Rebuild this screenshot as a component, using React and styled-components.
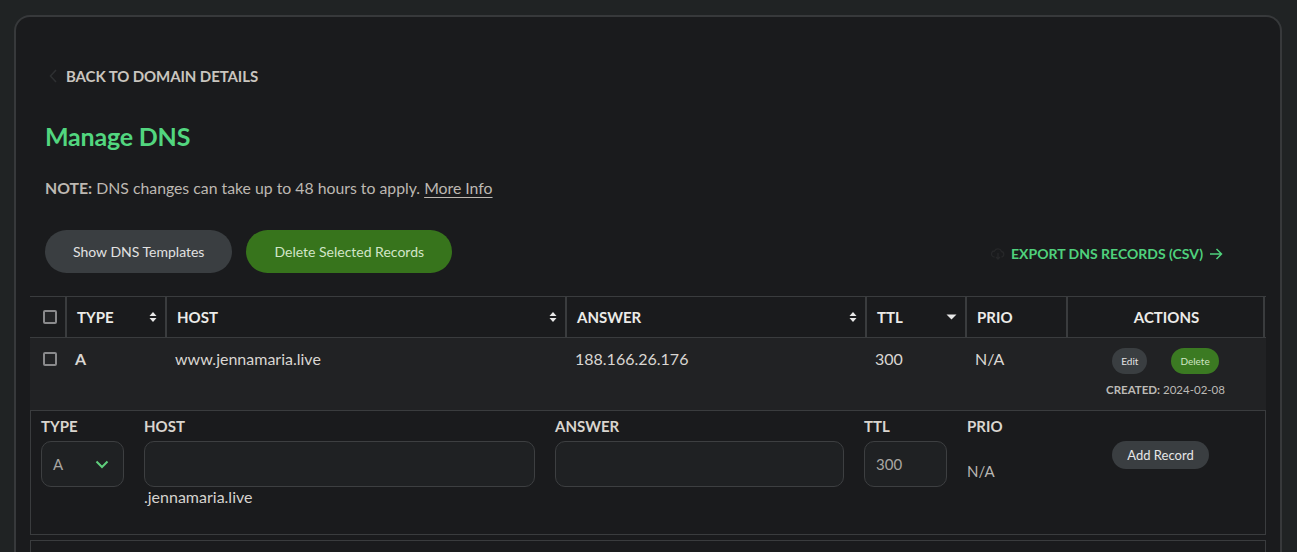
import React from 'react';
import styled, { createGlobalStyle } from 'styled-components';

const GlobalStyle = createGlobalStyle`
  body {
    margin: 0;
    background-color: #202324;
    font-family: Lato, "Liberation Sans", sans-serif;
    color: #d8d8d8;
  }
`;

const Page = styled.div`
  padding: 15px 15px 0 14px;
  height: 552px;
  overflow: hidden;
  box-sizing: border-box;
`;

const Card = styled.div`
  background-color: #1a1b1d;
  border: 2px solid #37393b;
  border-bottom: none;
  border-radius: 16px 16px 0 0;
  padding: 0 14px 0 14px;
  min-height: 560px;
`;

const Header = styled.div`
  padding: 0 15px;
`;

const BackLink = styled.a`
  display: flex;
  align-items: center;
  gap: 8px;
  margin-top: 50px;
  margin-left: 4px;
  font-size: 15px;
  font-weight: 700;
  color: #c9c5bf;
  text-transform: uppercase;
  letter-spacing: -0.1px;
  cursor: pointer;
`;

const Title = styled.h1`
  margin: 36px 0 0;
  font-size: 25px;
  font-weight: 700;
  color: #52d67f;
  letter-spacing: -0.2px;
`;

const Note = styled.p`
  margin: 27px 0 0;
  font-size: 15.8px;
  color: #bdb8b2;

  b {
    font-weight: 700;
  }

  a {
    color: #bdb8b2;
    text-decoration: underline;
    text-underline-offset: 3px;
  }
`;

const Toolbar = styled.div`
  display: flex;
  align-items: center;
  gap: 14px;
  margin-top: 33px;
  padding-right: 28px;
`;

const PillButton = styled.button`
  height: 43px;
  padding: 0 28px;
  border: none;
  border-radius: 22px;
  font-family: inherit;
  font-size: 14px;
  color: ${p => (p.$green ? '#d2e6c8' : '#e2e2e2')};
  background-color: ${p => (p.$green ? '#37741c' : '#3a3e41')};
  cursor: pointer;
`;

const ExportLink = styled.a`
  margin-left: auto;
  margin-top: 4px;
  display: flex;
  align-items: center;
  gap: 6px;
  font-size: 14px;
  font-weight: 700;
  color: #4fd17c;
  text-transform: uppercase;
  cursor: pointer;
`;

const Table = styled.div`
  margin-top: 23px;
`;

const GridRow = styled.div`
  display: grid;
  grid-template-columns: 35px 100px 400px 300px 100px 101px 199px;
  background-color: ${p => (p.$alt ? '#212224' : 'transparent')};
  min-height: ${p => p.$h || 0}px;
`;

const HeadRow = styled(GridRow)`
  border-top: 1px solid #3a3c3e;
  border-bottom: 1px solid #3a3c3e;
`;

const HeadCell = styled.div`
  display: flex;
  align-items: center;
  justify-content: ${p => (p.$center ? 'center' : 'space-between')};
  height: 40px;
  padding: 0 8px 0 10px;
  border-left: ${p => (p.$plain ? 'none' : '2px solid #3a3c3e')};
  border-right: ${p => (p.$last ? '2px solid #3a3c3e' : 'none')};
  font-size: 15px;
  font-weight: 700;
  color: #ecebe8;
  text-transform: uppercase;
`;

const Cell = styled.div`
  padding: 11px 10px 0 ${p => (p.$pad ?? 10)}px;
  font-size: 16px;
  font-weight: ${p => (p.$bold ? 700 : 400)};
  color: #d9d6d2;
  line-height: 19px;
`;

const CheckBox = styled.span`
  display: block;
  width: 10px;
  height: 10px;
  margin: ${p => p.$m};
  border: 2px solid #8a8a8c;
  border-radius: 2px;
  background-color: #232426;
`;

const ActionsCell = styled.div`
  display: flex;
  flex-direction: column;
  align-items: center;
  padding-top: 10px;
`;

const ActionButtons = styled.div`
  display: flex;
  gap: 24px;
`;

const SmallButton = styled.button`
  height: 26px;
  padding: 0 9px;
  border: none;
  border-radius: 13px;
  font-family: inherit;
  font-size: 10px;
  color: ${p => (p.$green ? '#cfe6c4' : '#e4e4e4')};
  background-color: ${p => (p.$green ? '#3b7a22' : '#3a3e41')};
`;

const Created = styled.div`
  margin-top: 9px;
  font-size: 11.5px;
  color: #bcbab6;

  b {
    font-weight: 700;
  }
`;

const FormBox = styled.div`
  border: 1px solid #3a3c3e;
  padding: 6px 10px 14px;
  height: 103px;
`;

const FormGrid = styled.div`
  display: grid;
  grid-template-columns: 83px 391px 289px 83px 79px 1fr;
  column-gap: 20px;
`;

const Field = styled.div`
  display: flex;
  flex-direction: column;
`;

const Label = styled.label`
  font-size: 15px;
  font-weight: 700;
  color: #d9d5cf;
  line-height: 18px;
`;

const InputBox = styled.div`
  display: flex;
  align-items: center;
  justify-content: space-between;
  margin-top: 6px;
  height: 44px;
  padding: 0 14px 0 11px;
  border: 1px solid #3d3f41;
  border-radius: 10px;
  background-color: #1f2123;
  font-size: 15px;
  color: #a9a6a2;
`;

const Hint = styled.span`
  font-size: 16px;
  line-height: 19px;
  color: #d6d3cf;
`;

const PrioValue = styled.span`
  margin-top: 27px;
  font-size: 15px;
  color: #b9b6b2;
`;

const AddCell = styled.div`
  display: flex;
  justify-content: center;
  padding-top: 24px;
`;

const AddButton = styled.button`
  height: 28px;
  padding: 0 15px;
  border: none;
  border-radius: 14px;
  font-family: inherit;
  font-size: 13px;
  color: #e6e6e6;
  background-color: #3a3e41;
`;

const NextBox = styled.div`
  margin-top: 5px;
  border: 1px solid #3a3c3e;
  height: 60px;
`;

const SortBoth = () => (
  <svg width="8" height="12" viewBox="0 0 8 12">
    <path d="M4 1 L7.5 5 H0.5 Z M4 11 L7.5 7 H0.5 Z" fill="#e8e8e8" />
  </svg>
);

const SortDown = () => (
  <svg width="11" height="8" viewBox="0 0 11 8">
    <path d="M0.5 1.5 H10.5 L5.5 6.5 Z" fill="#e8e8e8" />
  </svg>
);

const columns = [
  { name: 'Type', sort: 'both' },
  { name: 'Host', sort: 'both' },
  { name: 'Answer', sort: 'both' },
  { name: 'TTL', sort: 'down' },
  { name: 'Prio' },
];

function App() {
  return (
    <>
      <GlobalStyle />
      <Page>
        <Card>
          <Header>
            <BackLink>
              <svg width="9" height="14" viewBox="0 0 9 14">
                <path d="M7 1 L1.5 7 L7 13" stroke="#2e3032" strokeWidth="1.5" fill="none" />
              </svg>
              Back to Domain Details
            </BackLink>
            <Title>Manage DNS</Title>
            <Note>
              <b>NOTE:</b> DNS changes can take up to 48 hours to apply. <a>More Info</a>
            </Note>
            <Toolbar>
              <PillButton>Show DNS Templates</PillButton>
              <PillButton $green>Delete Selected Records</PillButton>
              <ExportLink>
                <svg width="14" height="12" viewBox="0 0 14 12">
                  <path d="M3.5 9 A3 3 0 0 1 3.5 3 A3.8 3.8 0 0 1 10.5 3.5 A2.8 2.8 0 0 1 10.5 9 M7 5 V11 M5 9 L7 11 L9 9" stroke="#262729" strokeWidth="1.3" fill="none" />
                </svg>
                Export DNS Records (CSV)
                <svg width="14" height="14" viewBox="0 0 14 14">
                  <path d="M1 7 H12.5 M7.5 2 L12.5 7 L7.5 12" stroke="#4fd17c" strokeWidth="1.5" fill="none" />
                </svg>
              </ExportLink>
            </Toolbar>
          </Header>

          <Table>
            <HeadRow>
              <HeadCell $plain $center>
                <CheckBox $m="0 0 0 3px" />
              </HeadCell>
              {columns.map(c => (
                <HeadCell key={c.name}>
                  {c.name}
                  {c.sort === 'both' && <SortBoth />}
                  {c.sort === 'down' && <SortDown />}
                </HeadCell>
              ))}
              <HeadCell $center $last>Actions</HeadCell>
            </HeadRow>

            <GridRow $alt $h={72}>
              <Cell $pad={0}>
                <CheckBox $m="3px 0 0 13px" />
              </Cell>
              <Cell $bold>A</Cell>
              <Cell>www.jennamaria.live</Cell>
              <Cell>188.166.26.176</Cell>
              <Cell>300</Cell>
              <Cell>N/A</Cell>
              <ActionsCell>
                <ActionButtons>
                  <SmallButton>Edit</SmallButton>
                  <SmallButton $green>Delete</SmallButton>
                </ActionButtons>
                <Created>
                  <b>CREATED:</b> 2024-02-08
                </Created>
              </ActionsCell>
            </GridRow>

            <FormBox>
              <FormGrid>
                <Field>
                  <Label>TYPE</Label>
                  <InputBox>
                    A
                    <svg width="14" height="9" viewBox="0 0 14 9">
                      <path d="M1.5 1.5 L7 7 L12.5 1.5" stroke="#5fcf7c" strokeWidth="2" fill="none" />
                    </svg>
                  </InputBox>
                </Field>
                <Field>
                  <Label>HOST</Label>
                  <InputBox />
                  <Hint>.jennamaria.live</Hint>
                </Field>
                <Field>
                  <Label>ANSWER</Label>
                  <InputBox />
                </Field>
                <Field>
                  <Label>TTL</Label>
                  <InputBox>300</InputBox>
                </Field>
                <Field>
                  <Label>PRIO</Label>
                  <PrioValue>N/A</PrioValue>
                </Field>
                <AddCell>
                  <AddButton>Add Record</AddButton>
                </AddCell>
              </FormGrid>
            </FormBox>
            <NextBox />
          </Table>
        </Card>
      </Page>
    </>
  );
}

export default App;
